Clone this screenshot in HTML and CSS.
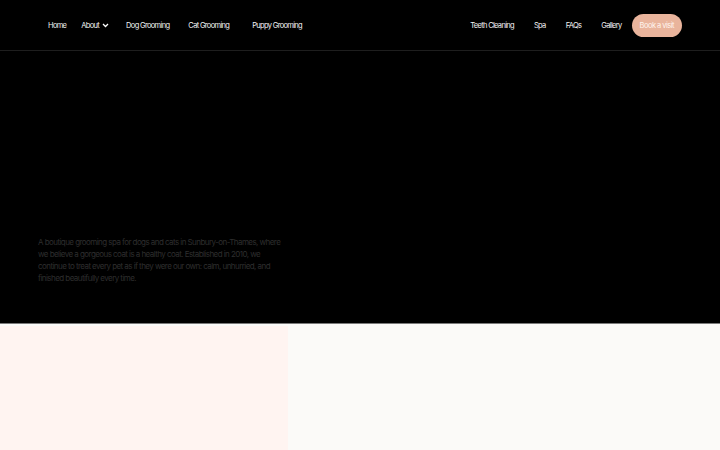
FILE: index.html
```html
<!DOCTYPE html>
<html>
<head>
<meta charset="utf-8">
<title>Grooming Spa</title>
<link rel="stylesheet" href="styles.css">
</head>
<body>

<header class="topo">
    <nav class="menu menu_esq">
        <a class="link" href="#">Home</a>
        <a class="link" href="#">About
            <svg class="seta" width="7" height="5" viewBox="0 0 7 5"><path d="M1 1l2.5 2.5L6 1" fill="none" stroke="#fff" stroke-width="1.3"/></svg>
        </a>
        <a class="link mais_2" href="#">Dog Grooming</a>
        <a class="link mais_4" href="#">Cat Grooming</a>
        <a class="link mais_8" href="#">Puppy Grooming</a>
    </nav>
    <nav class="menu menu_dir">
        <a class="link" href="#">Teeth Cleaning</a>
        <a class="link" href="#">Spa</a>
        <a class="link" href="#">FAQs</a>
        <a class="link" href="#">Gallery</a>
        <a class="botao" href="#">Book a visit</a>
    </nav>
</header>

<section class="hero">
    <p class="intro">A boutique grooming spa for dogs and cats in Sunbury-on-Thames, where we believe a gorgeous coat is a healthy coat. Established in 2010, we continue to treat every pet as if they were our own: calm, unhurried, and finished beautifully every time.</p>
</section>

<section class="paineis">
    <div class="painel_rosa"></div>
    <div class="painel_claro"></div>
</section>

</body>
</html>
```

FILE: styles.css
```css
body{
    margin: 0;
    font-family: Inter, "Liberation Sans", sans-serif;
    background-color: #000;
}

.topo{
    height: 49px;
    display: flex;
    justify-content: space-between;
    align-items: center;
    padding: 1px 38px 0 48px;
    border-bottom: 1px solid #1e1e1e;
}

.menu{
    display: flex;
    align-items: center;
}

.menu_esq{
    gap: 15px;
}

.menu_dir .link{
    padding: 0 10px;
}

.link{
    color: #f4f4f4;
    text-decoration: none;
    font-size: 7.5px;
    letter-spacing: -0.09em;
    display: flex;
    align-items: center;
    gap: 3px;
}

.mais_2{ margin-left: 2px; }
.mais_4{ margin-left: 4px; }
.mais_8{ margin-left: 8px; }

.seta{
    display: block;
}

.botao{
    background-color: #e9b49c;
    color: #fff4ee;
    text-decoration: none;
    font-size: 7.5px;
    letter-spacing: -0.07em;
    padding: 7px 8px;
    border-radius: 12px;
    line-height: 9px;
}

.hero{
    height: 272px;
    display: flex;
    align-items: flex-end;
    padding: 0 38px;
    border-bottom: 1px solid #7a7a7a;
}

.intro{
    color: #2e2e2e;
    font-size: 8px;
    line-height: 12px;
    letter-spacing: -0.07em;
    width: 250px;
    margin: 0 0 39px 0;
}

.paineis{
    display: flex;
    height: 140px;
    background-color: #fbfaf8;
}

.painel_rosa{
    width: 288px;
    margin-top: 2px;
    background-color: #fff4f1;
}

.painel_claro{
    flex: 1;
}
```
